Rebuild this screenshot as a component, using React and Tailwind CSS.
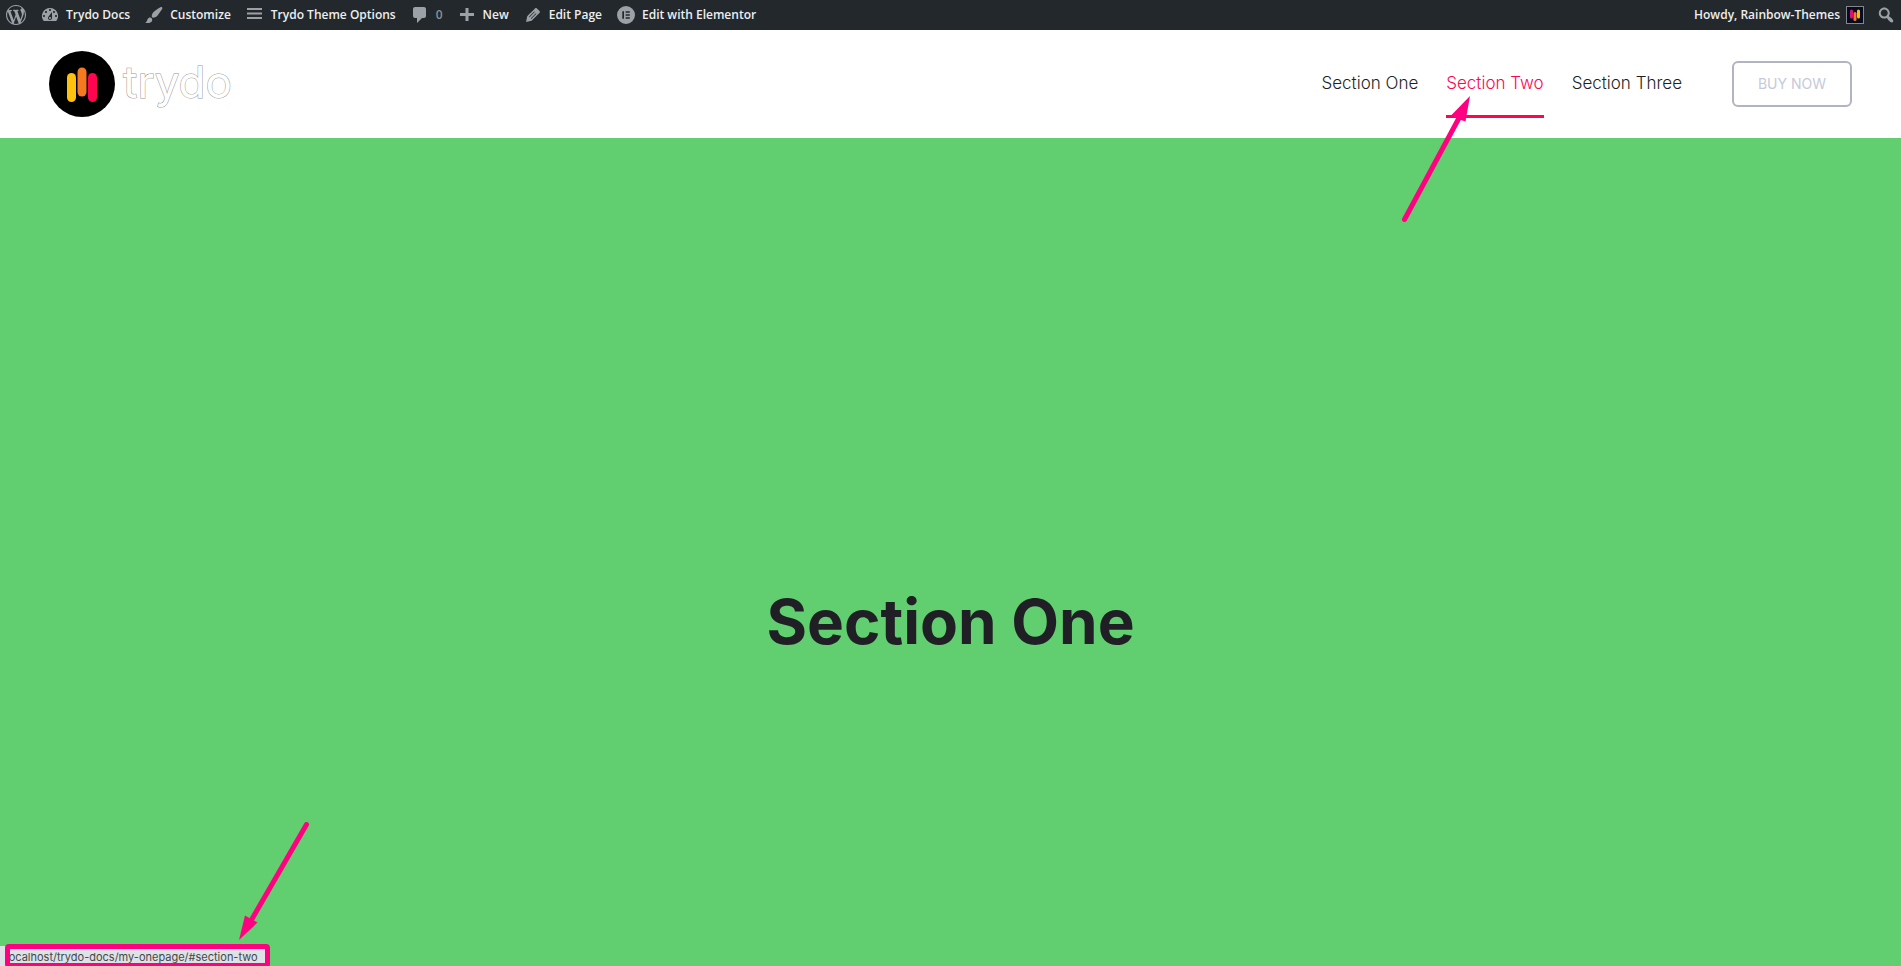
const icons = {
  wordpress:
    'M20 10c0-5.51-4.49-10-10-10C4.48 0 0 4.49 0 10c0 5.52 4.48 10 10 10 5.51 0 10-4.48 10-10zM7.78 15.37L4.37 6.22c.55-.02 1.17-.08 1.17-.08.5-.06.44-1.13-.06-1.11 0 0-1.45.11-2.37.11-.18 0-.37 0-.58-.01C4.12 2.69 6.87 1.11 10 1.11c2.33 0 4.45.87 6.05 2.34-.68-.11-1.65.39-1.65 1.58 0 .74.45 1.36.9 2.1.35.61.55 1.36.55 2.46 0 1.49-1.4 5-1.4 5l-3.03-8.37c.54-.02.82-.17.82-.17.5-.05.44-1.25-.06-1.22 0 0-1.44.12-2.38.12-.87 0-2.33-.12-2.33-.12-.5-.03-.56 1.2-.06 1.22l.92.08 1.26 3.41zM17.41 10c.24-.64.74-1.87.43-4.25.7 1.29 1.05 2.71 1.05 4.25 0 3.29-1.73 6.24-4.4 7.78.97-2.59 1.94-5.2 2.92-7.78zM6.1 18.09C3.12 16.65 1.11 13.53 1.11 10c0-1.3.23-2.48.72-3.59C3.25 10.3 4.67 14.2 6.1 18.09zm4.03-6.63l2.58 6.98c-.86.29-1.76.45-2.71.45-.79 0-1.57-.11-2.29-.33.81-2.38 1.62-4.74 2.42-7.1z',
  dashboard:
    'M3.76 16h12.48A7.998 7.998 0 0 0 10 3a7.998 7.998 0 0 0-6.24 13zM10 4c.55 0 1 .45 1 1s-.45 1-1 1-1-.45-1-1 .45-1 1-1zM6 6c.55 0 1 .45 1 1s-.45 1-1 1-1-.45-1-1 .45-1 1-1zm8 0c.55 0 1 .45 1 1s-.45 1-1 1-1-.45-1-1 .45-1 1-1zm-5.37 5.55L12 7v6c0 1.1-.9 2-2 2s-2-.9-2-2c0-.57.24-1.08.63-1.45zM4 10c.55 0 1 .45 1 1s-.45 1-1 1-1-.45-1-1 .45-1 1-1zm12 0c.55 0 1 .45 1 1s-.45 1-1 1-1-.45-1-1 .45-1 1-1zm-5 3c0-.55-.45-1-1-1s-1 .45-1 1 .45 1 1 1 1-.45 1-1z',
  brush:
    'M18.33 3.57s.27-.8-.31-1.36c-.53-.52-1.22-.24-1.22-.24-.61.3-5.76 3.47-7.67 5.57-.86.96-2.06 3.79-1.09 4.82.92.98 3.96-.17 4.79-1 2.06-2.06 5.21-7.17 5.5-7.79zM1.4 17.65c2.37-1.56 1.46-3.41 3.23-4.64.93-.65 2.22-.62 3.08.29.63.67.8 2.57-.16 3.46-1.57 1.45-4 1.55-6.15.89z',
  menu: 'M2 3h15v2H2zM2 7.500h15v2H2zM2 12h15v2H2z',
  comment: 'M5 2h9c1.1 0 2 .9 2 2v7c0 1.1-.9 2-2 2h-2l-5 5v-5H5c-1.100 0-2-.9-2-2V4c0-1.100.9-2 2-2z',
  plus: 'M17 8v3h-5.500v5h-3v-5H3V8h5.500V3h3v5z',
  pencil:
    'M13.89 3.39l2.71 2.72c.46.46.42 1.24.03 1.64l-8.01 8.02-5.56 1.16 1.16-5.58s7.6-7.63 7.99-8.03c.39-.39 1.22-.39 1.68.07zM11.2 6.600l-5.200 5.200.500.500 5.200-5.200zM8.200 13.900l5.200-5.200-.500-.500-5.200 5.200z',
  elementor:
    'M10 1a9 9 0 1 0 0 18a9 9 0 0 0 0-18zM6.300 6.200h1.700v7.600H6.300zM9.600 6.200h4.200v1.500H9.600zM9.600 9.250h4.200v1.500H9.600zM9.600 12.300h4.200v1.500H9.600z',
  search:
    'M12.14 4.18c1.87 1.87 2.11 4.75.72 6.89.12.1.22.21.36.31.2.16.47.36.81.59.34.24.56.39.66.47.42.31.73.57.94.78.32.32.6.65.84 1 .25.35.44.69.59 1.04.14.35.21.68.18 1-.02.32-.14.59-.36.81s-.49.34-.81.36c-.31.02-.65-.04-.99-.19-.35-.14-.7-.34-1.04-.59-.35-.24-.68-.52-1-.84-.21-.21-.47-.52-.77-.93-.1-.13-.25-.35-.47-.66-.22-.32-.4-.57-.56-.78-.16-.2-.29-.35-.44-.5-2.07 1.09-4.69.76-6.44-.98-2.14-2.15-2.14-5.64 0-7.78 2.15-2.15 5.63-2.15 7.78 0zm-1.41 6.36c1.36-1.37 1.36-3.58 0-4.95-1.37-1.37-3.59-1.37-4.95 0-1.37 1.37-1.37 3.58 0 4.95 1.36 1.37 3.58 1.37 4.95 0z',
};

function Icon({ name }) {
  return (
    <svg viewBox="0 0 20 20" className="size-5 shrink-0 fill-[#9ca1a7]" fillRule="evenodd" aria-hidden="true">
      <path d={icons[name]} />
    </svg>
  );
}

function BarLink({ icon, label, muted }) {
  return (
    <a href="#" className="flex items-center gap-1.5">
      <Icon name={icon} />
      <span className={muted ? 'text-[#8b9096]' : ''}>{label}</span>
    </a>
  );
}

function AdminBar() {
  return (
    <nav
      aria-label="Toolbar"
      className="flex h-[30px] items-center justify-between bg-[#23282d] pr-[5px] pb-px pl-1.5 font-['Open_Sans','Noto_Sans',sans-serif] text-xs leading-5 font-semibold whitespace-nowrap text-[#eeeeee]"
    >
      <div className="flex items-center gap-3.5">
        <a href="#" aria-label="About WordPress">
          <Icon name="wordpress" />
        </a>
        <BarLink icon="dashboard" label="Trydo Docs" />
        <BarLink icon="brush" label="Customize" />
        <BarLink icon="menu" label="Trydo Theme Options" />
        <BarLink icon="comment" label="0" muted />
        <BarLink icon="plus" label="New" />
        <BarLink icon="pencil" label="Edit Page" />
        <BarLink icon="elementor" label="Edit with Elementor" />
      </div>
      <div className="flex items-center gap-3">
        <a href="#" className="flex items-center gap-1.5">
          <span>Howdy, Rainbow-Themes</span>
          <svg viewBox="0 0 18 18" className="size-[18px]" aria-hidden="true">
            <rect x="0.5" y="0.5" width="17" height="17" fill="#070b22" stroke="#82878c" />
            <g strokeWidth="3" strokeLinecap="round">
              <path d="M5.500 5v6" stroke="#d8127d" />
              <path d="M9 7.500v6" stroke="#f47b20" />
              <path d="M12.500 5v6" stroke="#f8bd14" />
            </g>
          </svg>
        </a>
        <button type="button" aria-label="Search">
          <Icon name="search" />
        </button>
      </div>
    </nav>
  );
}

function Logo() {
  return (
    <a href="#" className="flex items-center gap-2">
      <svg viewBox="0 0 66 66" className="size-[66px]" aria-hidden="true">
        <circle cx="33" cy="33" r="33" fill="#000" />
        <g strokeWidth="9" strokeLinecap="round">
          <path d="M22.500 26.500v20" stroke="#fec10d" />
          <path d="M33 21v20" stroke="#f57921" />
          <path d="M43.500 26.500v20" stroke="#ff0550" />
        </g>
      </svg>
      <span className="-mt-1 font-['Inter',sans-serif] text-[44px] leading-none text-white [-webkit-text-stroke:1px_#949494] [paint-order:stroke_fill]">
        trydo
      </span>
    </a>
  );
}

function Header() {
  return (
    <header className="flex h-[108px] items-center justify-between bg-white px-[49px] font-['Inter',sans-serif]">
      <Logo />
      <div className="flex items-center gap-[50px]">
        <nav aria-label="Main" className="flex gap-7 text-[17px] leading-[63px] font-light text-[#1f1f25]">
          <a href="#section-one" className="pt-0.5">
            Section One
          </a>
          <a href="#section-two" className="border-b-3 border-[#ff0550] pt-0.5 text-[#ff0550]">
            Section Two
          </a>
          <a href="#section-three" className="pt-0.5">
            Section Three
          </a>
        </nav>
        <button
          type="button"
          className="h-[46px] w-[120px] rounded-md border-2 border-[#b1b4c1] text-sm text-[#c6c9d8]"
        >
          BUY NOW
        </button>
      </div>
    </header>
  );
}

export default function App() {
  return (
    <div className="relative flex min-h-screen flex-col overflow-hidden">
      <AdminBar />
      <Header />
      <main className="flex flex-1 items-center justify-center bg-[#61ce70] pt-35">
        <h1 className="font-['Inter',sans-serif] text-[62px] leading-none font-bold text-[#1f1f25]">Section One</h1>
      </main>

      <svg
        viewBox="0 0 72 128"
        className="absolute top-[95px] right-[430px] h-32 w-[72px]"
        aria-hidden="true"
      >
        <path d="M5.500 124.500L60 23" stroke="#ff0080" strokeWidth="5" strokeLinecap="round" />
        <path d="M71 1L52 20.500L57 23L62 25L66.500 26.500z" fill="#ff0080" />
      </svg>
      <svg viewBox="0 0 72 120" className="absolute bottom-6 left-[238px] h-[120px] w-[72px]" aria-hidden="true">
        <path d="M68.500 2.500L14 97" stroke="#ff0080" strokeWidth="5" strokeLinecap="round" />
        <path d="M1 118L7 93.500L19.500 100.500z" fill="#ff0080" />
      </svg>

      <div className="absolute bottom-0 left-0 h-5 w-[268px] bg-[#dee1e6] pl-1.5 font-['Inter','Noto_Sans',sans-serif] text-[11px] leading-[22px] whitespace-nowrap text-[#45474a]">
        localhost/trydo-docs/my-onepage/#section-two
      </div>
      <div className="absolute -bottom-0.5 left-[5px] h-6 w-[265px] rounded-sm border-5 border-[#ff0080]" />
    </div>
  );
}
